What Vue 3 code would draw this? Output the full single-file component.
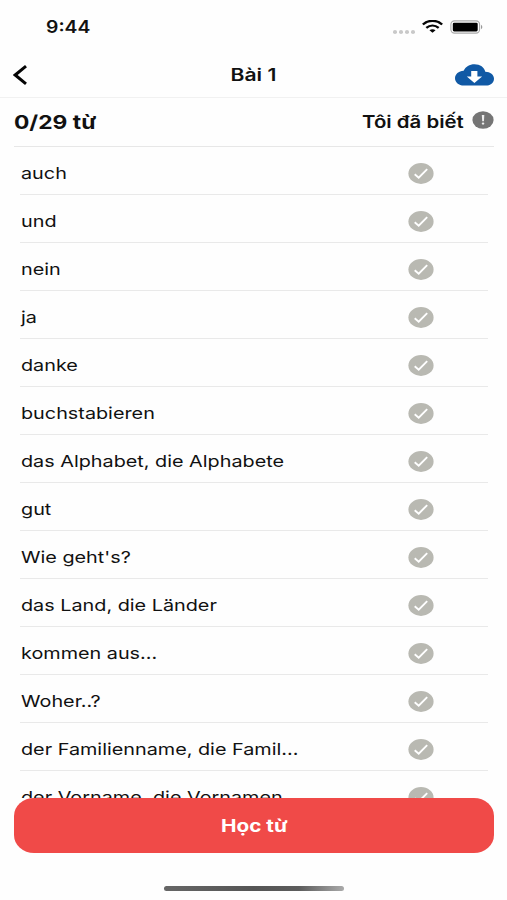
<template>
  <div class="screen">
    <div class="status-bar">
      <span class="time wide">9:44</span>
      <div class="status-icons">
        <div class="signal"><i v-for="n in 4" :key="n"></i></div>
        <svg class="wifi" viewBox="0 0 20 13" preserveAspectRatio="none">
          <path d="M.8 4.5C6-.4 14-.4 19.2 4.5" />
          <path d="M4.1 7.8c3.5-3 8.3-3 11.8 0" />
          <path class="dot" d="M7.1 10.2c1.7-1.3 4.1-1.3 5.8 0L10 12.8z" />
        </svg>
        <svg class="battery" viewBox="0 0 33 14">
          <rect class="shell" x="0.9" y="0.9" width="28.7" height="12.2" rx="3.6" />
          <rect x="2.8" y="2.7" width="24.9" height="8.7" rx="1.4" />
          <path class="cap" d="M31 4.8c1.8.7 1.8 3.7 0 4.4z" />
        </svg>
      </div>
    </div>

    <header class="nav-bar">
      <svg class="back" viewBox="0 0 14 20">
        <path d="M13 1.2 2.2 10 13 18.8" />
      </svg>
      <h1 class="nav-title wide">Bài 1</h1>
      <svg class="cloud" viewBox="0 0 39 22" preserveAspectRatio="none">
        <path class="cloud-body" d="M8.8 21.6C3.7 21.6 0 18.3 0 14.3 0 10.2 3.6 7 8.6 6.8 10.5 2.7 14.6.2 19.5.2c5.6 0 9.9 3 10.8 7.5 5 .2 8.7 2.9 8.7 7 0 4-3.6 6.9-8.4 6.9z" />
        <path class="cloud-arrow" d="M16.2 7.1h6.2v5.5h4.7L19.4 19l-7.6-6.4h4.4z" />
      </svg>
    </header>

    <div class="summary">
      <span class="count wide">0/29 từ</span>
      <div class="known">
        <span class="known-label wide">Tôi đã biết</span>
        <svg class="info" viewBox="0 0 22 18">
          <ellipse cx="11" cy="9" rx="10.6" ry="8.8" />
          <path d="M9.8 4h2.5l-.4 6.3h-1.7z" />
          <ellipse class="point" cx="11.05" cy="12.6" rx="1.3" ry="1.1" />
        </svg>
      </div>
    </div>

    <ul class="words">
      <li v-for="word in words" :key="word" class="word">
        <span class="word-text wide">{{ word }}</span>
        <svg class="check" viewBox="0 0 26 21">
          <ellipse cx="13" cy="10.5" rx="12.6" ry="10.4" />
          <path d="m6.7 11.2 4 3.4 8.5-8.5" />
        </svg>
      </li>
    </ul>

    <button class="learn"><span class="learn-text wide">Học từ</span></button>
    <div class="home-indicator"></div>
  </div>
</template>

<script setup>
const words = [
  'auch',
  'und',
  'nein',
  'ja',
  'danke',
  'buchstabieren',
  'das Alphabet, die Alphabete',
  'gut',
  "Wie geht's?",
  'das Land, die Länder',
  'kommen aus...',
  'Woher..?',
  'der Familienname, die Famil...',
  'der Vorname, die Vornamen'
]
</script>

<style>
body {
  margin: 0;
  background: #fefefe;
}
</style>

<style scoped>
.screen {
  display: flex;
  flex-direction: column;
  width: 507px;
  height: 900px;
  overflow: hidden;
  box-sizing: border-box;
  background: #fefefe;
  color: #111;
  font-family: Inter, 'Liberation Sans', sans-serif;
}

/* chữ kéo giãn theo chiều ngang */
.wide {
  display: block;
  white-space: nowrap;
  transform: scaleX(1.2);
  transform-origin: left center;
}

.status-bar {
  display: flex;
  justify-content: space-between;
  height: 52px;
  padding: 0 24px 0 46px;
  flex: none;
}

.time {
  margin-top: 17px;
  font-size: 17px;
  line-height: 21px;
  font-weight: 600;
  transform: scaleX(1.14);
}

.status-icons {
  display: flex;
  padding-top: 20px;
}

.signal {
  display: flex;
  gap: 2px;
  margin: 10px 7px 0 0;
}

.signal i {
  width: 4px;
  height: 3.5px;
  border-radius: 50%;
  background: #c9c9c9;
}

.wifi {
  width: 21px;
  height: 13px;
  margin-right: 7px;
}

.wifi path {
  fill: none;
  stroke: #050505;
  stroke-width: 2.3;
}

.wifi .dot {
  fill: #050505;
  stroke: none;
}

.battery {
  width: 33px;
  height: 14px;
}

.battery .shell {
  fill: #fff;
  stroke: #aaa;
  stroke-width: 1.1;
}

.battery .cap {
  fill: #999;
}

.nav-bar {
  display: grid;
  grid-template-columns: 1fr auto 1fr;
  align-items: center;
  height: 46px;
  padding: 0 13px;
  box-sizing: border-box;
  border-bottom: 1px solid #f1f1f1;
  flex: none;
}

.back {
  width: 14px;
  height: 20px;
}

.back path {
  fill: none;
  stroke: #050505;
  stroke-width: 3;
}

.nav-title {
  margin: 0;
  font-size: 17px;
  line-height: 22px;
  font-weight: 600;
  transform: scaleX(1.24);
  transform-origin: center;
}

.cloud {
  width: 39px;
  height: 22px;
  justify-self: end;
}

.cloud-body {
  fill: #1059a5;
}

.cloud-arrow {
  fill: #fff;
}

.summary {
  display: flex;
  justify-content: space-between;
  height: 49px;
  margin: 0 13px 0 14px;
  box-sizing: border-box;
  border-bottom: 1px solid #e7e7e7;
  flex: none;
}

.count {
  margin-top: 13px;
  font-size: 19px;
  line-height: 24px;
  font-weight: 700;
}

.known {
  display: flex;
}

.known-label {
  margin: 13px 8px 0 0;
  font-size: 17px;
  line-height: 22px;
  font-weight: 600;
  transform-origin: right center;
}

.info {
  width: 22px;
  height: 18px;
  margin-top: 13px;
}

.info ellipse {
  fill: #757575;
}

.info path,
.info .point {
  fill: #eee;
}

.words {
  flex: 1;
  min-height: 0;
  overflow: hidden;
  margin: 0 19px 0 20px;
  padding: 0;
  list-style: none;
}

.word {
  display: flex;
  justify-content: space-between;
  align-items: center;
  height: 48px;
  padding: 6px 54px 0 1px;
  box-sizing: border-box;
  border-bottom: 1px solid #e9e9e9;
}

.word-text {
  margin-bottom: 2px;
  font-size: 16.5px;
  line-height: 24px;
}

.check {
  width: 26px;
  height: 21px;
}

.check ellipse {
  fill: #b9b9b2;
}

.check path {
  fill: none;
  stroke: #fff;
  stroke-width: 1.9;
}

.learn {
  display: flex;
  justify-content: center;
  align-items: center;
  height: 55px;
  margin: 0 13px 0 14px;
  padding: 1px 0 0;
  border: none;
  border-radius: 20px / 18px;
  background: #f04a48;
  color: #fff;
  font-family: inherit;
  flex: none;
}

.learn-text {
  font-size: 17px;
  line-height: 22px;
  font-weight: 700;
  transform: scaleX(1.22);
  transform-origin: center;
}

.home-indicator {
  width: 180px;
  height: 5px;
  margin: 33px auto 9px 164px;
  border-radius: 3px;
  background: linear-gradient(90deg, #666, #555 50%, #5c5c5c 75%, #aaa);
  flex: none;
}
</style>
